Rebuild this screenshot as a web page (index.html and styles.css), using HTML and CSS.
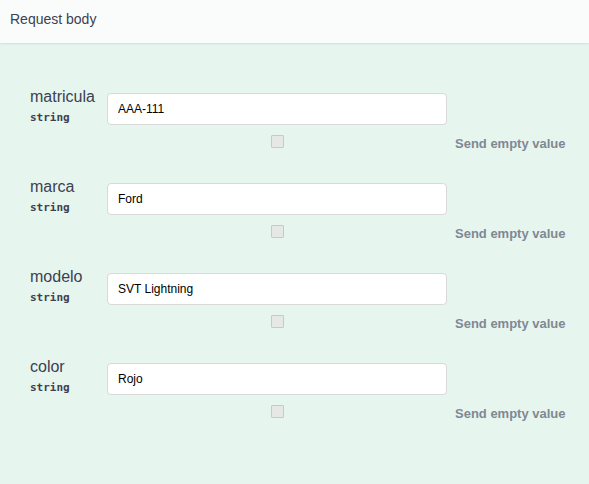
FILE: index.html
```html
<!DOCTYPE html>
<html>
<head>
<meta charset="utf-8">
<link rel="stylesheet" href="styles.css">
</head>
<body>
<div class="section">
  <div class="section-header">Request body</div>
  <div class="section-body">
    <div class="param">
      <div class="param-name"><div class="name">matricula</div><div class="type">string</div></div>
      <div class="field"><input class="text-input" type="text" value="AAA-111"></div>
      <div class="check-cell"><span class="checkbox"></span></div>
      <div class="empty-label">Send empty value</div>
    </div>
    <div class="param">
      <div class="param-name"><div class="name">marca</div><div class="type">string</div></div>
      <div class="field"><input class="text-input" type="text" value="Ford"></div>
      <div class="check-cell"><span class="checkbox"></span></div>
      <div class="empty-label">Send empty value</div>
    </div>
    <div class="param">
      <div class="param-name"><div class="name">modelo</div><div class="type">string</div></div>
      <div class="field"><input class="text-input" type="text" value="SVT Lightning"></div>
      <div class="check-cell"><span class="checkbox"></span></div>
      <div class="empty-label">Send empty value</div>
    </div>
    <div class="param">
      <div class="param-name"><div class="name">color</div><div class="type">string</div></div>
      <div class="field"><input class="text-input" type="text" value="Rojo"></div>
      <div class="check-cell"><span class="checkbox"></span></div>
      <div class="empty-label">Send empty value</div>
    </div>
  </div>
</div>
</body>
</html>
```
FILE: styles.css
```css
html, body {
  margin: 0;
  padding: 0;
}
body {
  font-family: "Liberation Sans", Arial, sans-serif;
  color: #3b4151;
  background: #e7f5ef;
  width: 589px;
  height: 484px;
  overflow: hidden;
}
.section {
  background: #e7f5ef;
  min-height: 484px;
}
.section-header {
  box-sizing: border-box;
  height: 43px;
  padding: 11px 10px 0;
  font-size: 14px;
  line-height: 16px;
  background: #fafcfb;
  box-shadow: 0 1px 2px rgba(0, 0, 0, 0.1);
  position: relative;
}
.section-body {
  display: flex;
  flex-direction: column;
  gap: 26px;
  padding: 45px 0 0 30px;
}
.param {
  display: grid;
  grid-template-columns: 77px 340px auto;
  align-items: start;
}
.name {
  font-size: 16px;
  line-height: 18px;
}
.type {
  font-family: "DejaVu Sans Mono", monospace;
  font-weight: bold;
  font-size: 11px;
  line-height: 15px;
  margin-top: 4px;
}
.field {
  padding-top: 5px;
}
.text-input {
  box-sizing: border-box;
  display: block;
  width: 340px;
  height: 32px;
  margin: 0;
  padding: 0 10px;
  border: 1px solid #d9d9d9;
  border-radius: 4px;
  background: #fff;
  font-family: "Liberation Sans", Arial, sans-serif;
  font-size: 12px;
  color: #000;
  outline: none;
}
.check-cell {
  grid-column: 2;
  display: flex;
  justify-content: center;
  padding-top: 10px;
}
.checkbox {
  box-sizing: border-box;
  display: block;
  width: 13px;
  height: 13px;
  background: #e6e8e7;
  border: 1px solid #c8c9c9;
  border-radius: 1px;
}
.empty-label {
  grid-column: 3;
  margin-left: 8px;
  margin-top: 11px;
  font-size: 13px;
  line-height: 16px;
  font-weight: bold;
  color: #808892;
  white-space: nowrap;
}
```
